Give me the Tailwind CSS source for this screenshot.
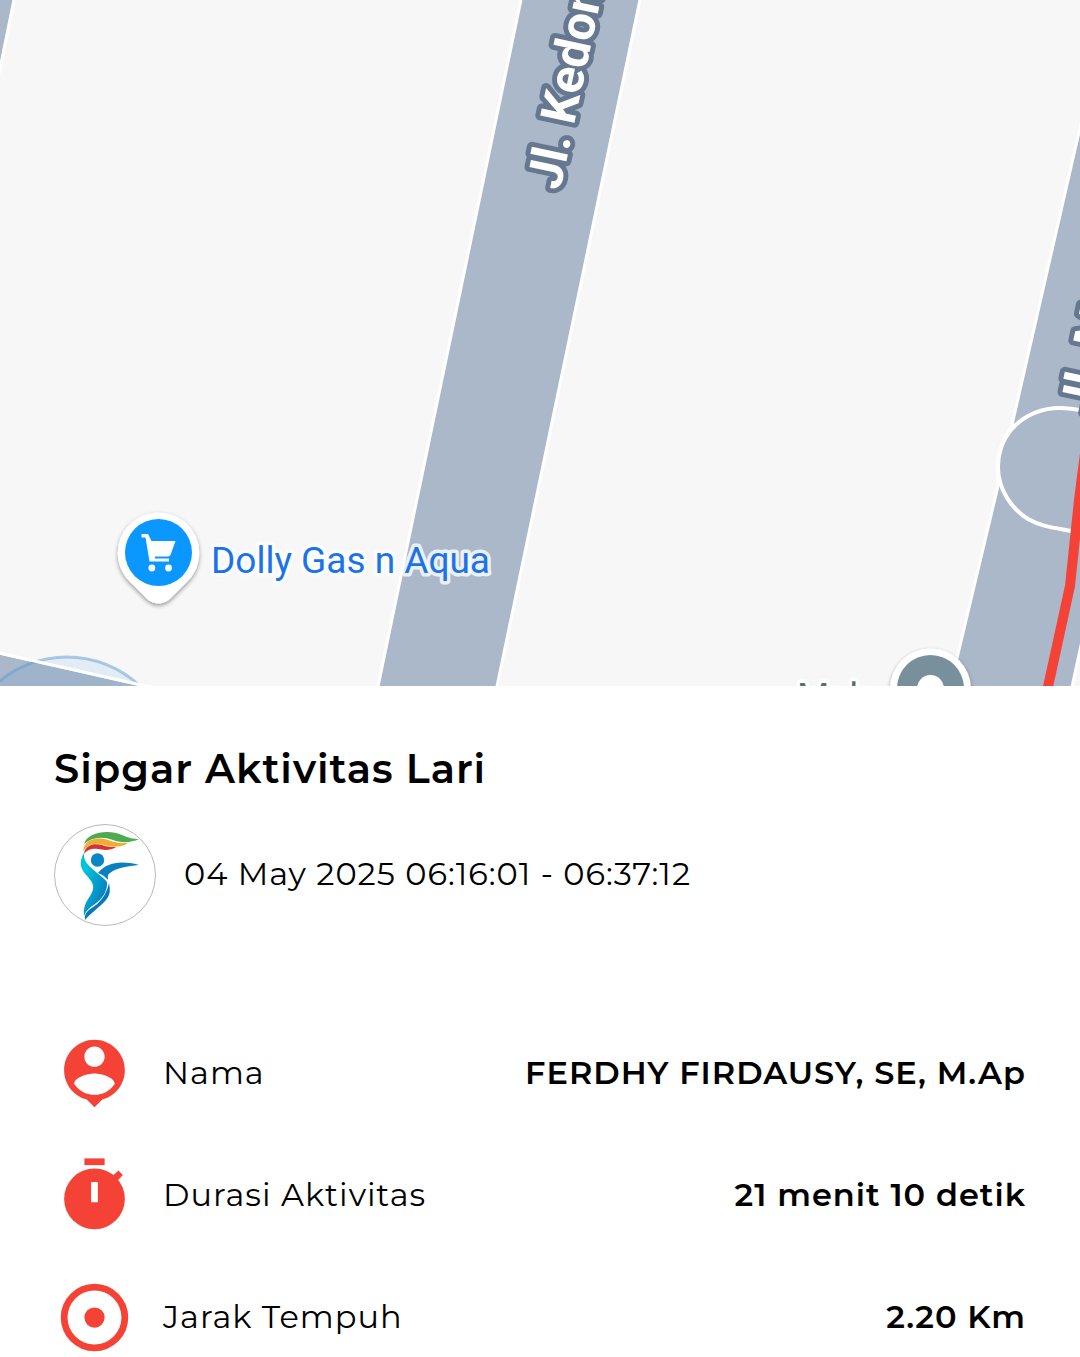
<!DOCTYPE html>
<html lang="id">
<head>
<meta charset="utf-8">
<meta name="viewport" content="width=device-width, initial-scale=1">
<title>Sipgar Aktivitas Lari</title>
<script src="https://cdn.jsdelivr.net/npm/@tailwindcss/browser@4"></script>
</head>
<body class="bg-white tracking-[1px] text-black font-['Montserrat','Inter',sans-serif]">
<section aria-label="Peta rute" class="h-[686px] overflow-hidden bg-[#f7f7f7] tracking-normal">
  <svg class="block h-full w-full" viewBox="0 0 1080 686" preserveAspectRatio="xMidYMid slice">
    <defs>
      <filter id="shadow" x="-30%" y="-30%" width="160%" height="160%"><feDropShadow dx="0" dy="2" stdDeviation="2" flood-color="#000" flood-opacity=".4"/></filter>
    </defs>
    <rect width="1080" height="686" fill="#f7f7f7"/>
    <!-- roads -->
    <g fill="#abb8c9" stroke="#fff" stroke-width="3">
      <path d="M-10 -10H16L-6 98Z"/>
      <path d="M523 -10L376 696H495L642 -10Z"/>
      <path d="M1090 84L1012 425C1003 438 998 450 998 467V486L948 696H1070L1090 604Z"/>
      <path d="M-10 651L190 696H-10Z"/>
    </g>
    <circle cx="67" cy="763" r="106" fill="#4a9ae0" fill-opacity=".12" stroke="#5b9bd8" stroke-opacity=".5" stroke-width="3"/>
    <path d="M-10 651L190 696" stroke="#fff" stroke-width="3"/>
    <path d="M1085 411C1060 406 1045 407 1028 416C1008 427 998 446 998 467C998 490 1012 509 1028 519C1042 527 1056 528 1072 531" fill="none" stroke="#fff" stroke-width="4"/>
    <!-- street names -->
    <g class="font-[Roboto,sans-serif] font-bold" font-size="49" fill="#fff" stroke="#65788f" stroke-width="10" stroke-linejoin="round" paint-order="stroke">
      <text transform="translate(560 191) rotate(-78)">Jl. Kedondong</text>
      <text transform="translate(1093 416) rotate(-78)">Jl. Ma</text>
    </g>
    <path d="M1088 430L1079 500L1070 586L1046 696" fill="none" stroke="#f44336" stroke-width="10" stroke-linejoin="round"/>
    <!-- shop -->
    <g filter="url(#shadow)"><path d="M158.500 512.500a40.500 40.500 0 0 1 29 69L170 599Q158.500 608 147 599L129.500 581.500a40.500 40.500 0 0 1 29-69Z" fill="#fff"/></g>
    <circle cx="158.500" cy="552.500" r="33.500" fill="#0a97ff"/>
    <path d="M141.500 534h6.500l3.500 7H175.500l-5 14q-.8 1.500-3 1.500H155v2h14v3H149.500l-4-24H141.500Z" fill="#fff"/>
    <circle cx="151.800" cy="568" r="3.400" fill="#fff"/><circle cx="168.500" cy="568" r="3.400" fill="#fff"/>
    <text class="font-[Roboto,sans-serif]" x="211" y="573" font-size="37" fill="#1a73e8" stroke="#fff" stroke-opacity=".8" stroke-width="7" stroke-linejoin="round" paint-order="stroke">Dolly Gas n Aqua</text>
    <!-- place -->
    <text class="font-[Roboto,sans-serif]" x="797" y="709" font-size="37" fill="#546e7a" stroke="#fff" stroke-width="7" stroke-linejoin="round" paint-order="stroke">Mak</text>
    <circle cx="930.500" cy="689" r="40.500" fill="#fff" filter="url(#shadow)"/>
    <circle cx="930.500" cy="688.500" r="33.500" fill="#78909c"/>
    <circle cx="930.500" cy="688.500" r="13.500" fill="#fff"/>
  </svg>
</section>
<main class="px-[54px] pt-[59px]">
  <h1 class="text-[40px] leading-[48px] font-semibold">Sipgar Aktivitas Lari</h1>
  <div class="mt-[31px] flex items-center gap-7">
    <svg class="size-[102px] shrink-0" viewBox="0 0 102 102" role="img" aria-label="Sipgar">
      <defs><linearGradient id="body" x1="0" y1="0" x2="1" y2="1"><stop offset=".2" stop-color="#00c4dc"/><stop offset=".8" stop-color="#087fc0"/></linearGradient></defs>
      <circle cx="51" cy="51" r="50.500" fill="#fff" stroke="#999" stroke-width=".7"/>
      <path d="M30 20C33 8 55 5 68 11C75 14 79 15 85 15C77 19 67 19 59 16C48 12 38 13 30 20Z" fill="#4caa50"/>
      <path d="M29 27C31 14 44 13 54 16C62 19 67 19 74 19C67 24 57 23 50 21C41 18 34 20 29 27Z" fill="#f0ad30"/>
      <path d="M30 30C31 20 41 19 48 21C54 23 57 23 62 23C56 27 49 26 44 25C37 24 33 26 30 30Z" fill="#d8322e"/>
      <circle cx="43.500" cy="36" r="6.700" fill="#0a86c4"/>
      <path d="M44 49C52 39 66 36 85 41C74 42 62 44 56 49C53 51 54 53 54 56Q50 51 44 49Z" fill="#0a80c0"/>
      <path d="M30 29C29 39 37 43 43 49C48 53 54 57 53 60C53 68 48 75 41 80C35 84 32 87 30 92C29 83 32 78 36 72C41 64 40 60 34 53C27 46 24 39 30 29Z" fill="url(#body)"/>
      <path d="M55 59C53 68 49 75 42 81C35 86 30 88 31 96C38 88 47 82 52 76C57 70 56 65 55 59Z" fill="#0878b8"/>
    </svg>
    <p class="text-[32px] leading-[38px] pb-0.5">04 May 2025 06:16:01 - 06:37:12</p>
  </div>
  <dl class="mt-[86px] text-[32px]">
    <div class="flex h-[122px] items-center">
      <dt class="flex items-center gap-7">
        <svg class="size-[81px] shrink-0" viewBox="0 0 24 24" fill="#f44336" aria-hidden="true"><path d="M12 2c-4.970 0-9 4.030-9 9 0 4.170 2.840 7.670 6.690 8.690L12 22l2.310-2.310C18.160 18.670 21 15.170 21 11c0-4.970-4.030-9-9-9zm0 2c1.660 0 3 1.340 3 3s-1.340 3-3 3-3-1.340-3-3 1.340-3 3-3zm0 14.300c-2.500 0-4.710-1.280-6-3.220.03-1.990 4-3.080 6-3.080 1.990 0 5.970 1.090 6 3.080-1.290 1.940-3.500 3.220-6 3.220z"/></svg>
        Nama
      </dt>
      <dd class="ml-auto font-semibold">FERDHY FIRDAUSY, SE, M.Ap</dd>
    </div>
    <div class="flex h-[122px] items-center">
      <dt class="flex items-center gap-7">
        <svg class="size-[81px] shrink-0" viewBox="0 0 24 24" fill="#f44336" aria-hidden="true"><path d="M9 1h6v2H9z"/><circle cx="12" cy="13" r="9"/><path d="M17 6.500l2.100-1.900 1.300 1.300-2 2.200z"/><path fill="#fff" d="M11 8h2v6h-2z"/></svg>
        Durasi Aktivitas
      </dt>
      <dd class="ml-auto font-semibold">21 menit 10 detik</dd>
    </div>
    <div class="flex h-[122px] items-center">
      <dt class="flex items-center gap-7">
        <svg class="size-[81px] shrink-0" viewBox="0 0 24 24" fill="#f44336" aria-hidden="true"><path d="M12 2a10 10 0 1 0 0 20 10 10 0 0 0 0-20zm0 18a8 8 0 1 1 0-16 8 8 0 0 1 0 16zM15 12a3 3 0 1 1-6 0 3 3 0 0 1 6 0z"/></svg>
        Jarak Tempuh
      </dt>
      <dd class="ml-auto font-semibold">2.20 Km</dd>
    </div>
  </dl>
</main>
</body>
</html>
